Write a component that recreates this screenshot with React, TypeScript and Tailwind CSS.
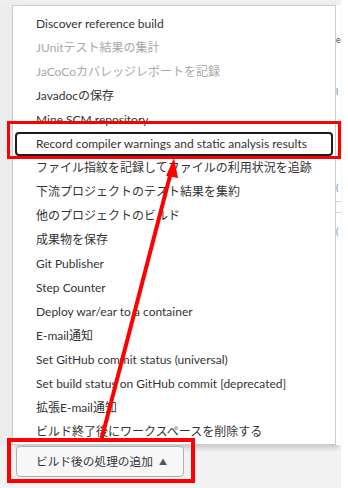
import React from "react";

const items = [
  { label: "Discover reference build" },
  { label: "JUnitテスト結果の集計", disabled: true },
  { label: "JaCoCoカバレッジレポートを記録", disabled: true },
  { label: "Javadocの保存" },
  { label: "Mine SCM repository" },
  { label: "Record compiler warnings and static analysis results", active: true },
  { label: "ファイル指紋を記録してファイルの利用状況を追跡" },
  { label: "下流プロジェクトのテスト結果を集約" },
  { label: "他のプロジェクトのビルド" },
  { label: "成果物を保存" },
  { label: "Git Publisher" },
  { label: "Step Counter" },
  { label: "Deploy war/ear to a container" },
  { label: "E-mail通知" },
  { label: "Set GitHub commit status (universal)" },
  { label: "Set build status on GitHub commit [deprecated]" },
  { label: "拡張E-mail通知" },
  { label: "ビルド終了後にワークスペースを削除する" },
];

const font = { fontFamily: 'Lato, "Noto Sans CJK JP", sans-serif' };

export default function App() {
  return (
    <div className="relative w-[348px] h-[488px] bg-white overflow-hidden" style={font}>
      <div className="w-[341px] h-full flex flex-col bg-[#f2f2f2]">
        <div className="h-[5px] bg-[#efefef]" />
        <div className="flex">
          <div className="w-[12px] bg-[#ececec]" />
          {/* dropdown menu */}
          <div className="w-[324px] h-[440px] bg-white border border-[#c9ced4] shadow-[3px_3px_5px_rgba(0,0,0,0.18)] pt-[6px] flex flex-col">
            {items.map((it) => (
              <div
                key={it.label}
                className={
                  it.active
                    ? "h-[24px] mx-[2px] flex items-center pl-[19px] border-2 border-[#1e1e1e] rounded-[4px] text-[12px] text-[#333] whitespace-nowrap"
                    : "h-[24px] flex items-center pl-[23px] text-[12px] whitespace-nowrap overflow-hidden " +
                      (it.disabled ? "text-[#a8a8a8]" : "text-[#333]")
                }
              >
                {it.label}
              </div>
            ))}
          </div>
          {/* page content peeking out behind the menu */}
          <div className="flex-1 bg-white flex flex-col text-[9px] overflow-hidden">
            <div className="h-[28px]" />
            <div className="text-[#444] leading-[14px]">e</div>
            <div className="h-[38px]" />
            <div className="text-[#4a7fc0] leading-[14px]">l</div>
            <div className="h-[82px]" />
            <div className="text-[#4a7fc0] leading-[14px]">(</div>
            <div className="h-[6px]" />
            <div className="h-px bg-[#d8d8d8]" />
            <div className="h-[10px]" />
            <div className="h-px bg-[#d8d8d8]" />
            <div className="h-[12px]" />
            <div className="text-[#4a7fc0] leading-[14px]">(</div>
          </div>
        </div>
        <div className="flex items-start pl-[16px] pt-[1px]">
          <button className="h-[31px] w-[168px] flex items-center pl-[19px] gap-[6px] rounded-[4px] border border-[#a9b0b8] bg-[#f7f7f7] text-[11.7px] text-[#333]">
            ビルド後の処理の追加
            <span className="text-[8px] text-[#555]">▲</span>
          </button>
        </div>
      </div>

      {/* red annotations */}
      <div className="absolute left-[7px] top-[121px] w-[334px] h-[38px] border-[3px] border-[#ff0000]" />
      <div className="absolute left-[7px] top-[438px] w-[188px] h-[45px] border-4 border-[#ff0000]" />
      <svg className="absolute left-0 top-0" width="348" height="488">
        <line x1="101" y1="441" x2="171" y2="172" stroke="#ff0000" strokeWidth="4" />
        <polygon points="174,158 166,176 178,178" fill="#ff0000" />
      </svg>
    </div>
  );
}
